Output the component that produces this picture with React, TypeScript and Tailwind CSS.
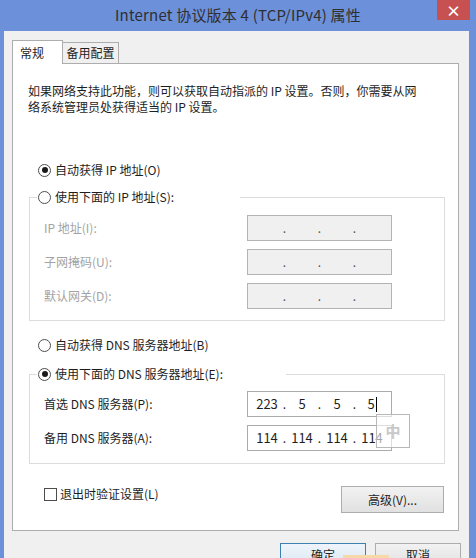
import React from "react";

const FONT = { fontFamily: '"Noto Sans CJK SC", "Microsoft YaHei", sans-serif' };

function Radio({ checked }: { checked?: boolean }) {
  return (
    <span className="w-[13px] h-[13px] rounded-full border border-[#4d4d4d] bg-white flex items-center justify-center shrink-0">
      {checked ? <span className="w-[6px] h-[6px] rounded-full bg-[#1a1a1a]" /> : null}
    </span>
  );
}

function IpBox({ values, disabled, caret }: { values: string[]; disabled?: boolean; caret?: boolean }) {
  return (
    <div
      className={
        "w-[145px] h-[26px] border flex items-center pl-[2px] " +
        (disabled ? "bg-[#f0f0f0] border-[#b4b4b4] text-[#a0a0a0]" : "bg-white border-[#ababab] text-[#1e1e1e]")
      }
    >
      {values.map((v, i) => (
        <React.Fragment key={i}>
          <span className="w-[34px] text-center text-[13px] leading-[24px] flex items-center justify-center">
            {v}
            {caret && i === 3 ? <span className="inline-block w-px h-[15px] bg-black ml-[1px]" /> : null}
          </span>
          {i < 3 ? (
            <span className={"w-[1px] text-[12px] leading-[24px] flex justify-center " + (disabled ? "text-[#555]" : "text-[#1e1e1e]")}>.</span>
          ) : null}
        </React.Fragment>
      ))}
    </div>
  );
}

function FieldRow({ label, disabled, children, last }: { label: string; disabled?: boolean; children: React.ReactNode; last?: boolean }) {
  return (
    <div className={"flex items-center h-[26px] " + (last ? "" : "mb-[8px]")}>
      <div className={"w-[217px] pl-[14px] text-[12px] " + (disabled ? "text-[#a3a3a3]" : "text-[#1e1e1e]")}>{label}</div>
      {children}
    </div>
  );
}

export default function App() {
  return (
    <div className="w-[476px] h-[558px] bg-[#6d90da] flex flex-col overflow-hidden relative text-[#1e1e1e]" style={FONT}>
      {/* Title bar */}
      <div className="h-[31px] shrink-0 relative flex items-center justify-center">
        <span className="text-[15px] text-[#2f2f2f] tracking-[0.2px]">Internet 协议版本 4 (TCP/IPv4) 属性</span>
        <div className="absolute right-[6px] top-0 w-[33px] h-[20px] bg-[#c75050] flex items-center justify-center text-white text-[15px] font-bold leading-none">
          ×
        </div>
      </div>

      {/* Body */}
      <div className="flex-1 ml-[4px] mr-[7px] bg-[#f0f0f0] pt-[9px] pl-[8px] flex flex-col">
        {/* Tabs */}
        <div className="flex items-end h-[23px] relative z-10">
          <div className="w-[51px] h-[24px] -mb-px bg-white border border-b-0 border-[#adadad] flex items-center pl-[7px] text-[12px]">
            常规
          </div>
          <div className="w-[56px] h-[21px] bg-[#f0f0f0] border border-l-0 border-b-0 border-[#adadad] flex items-center justify-center text-[12px]">
            备用配置
          </div>
        </div>

        {/* Panel */}
        <div className="w-[447px] h-[468px] bg-white border border-[#adadad] flex flex-col text-[12px]">
          <p className="pt-[19px] pl-[15px] leading-[16px] text-[12px]">
            如果网络支持此功能，则可以获取自动指派的 IP 设置。否则，你需要从网
            <br />
            络系统管理员处获得适当的 IP 设置。
          </p>

          <div className="mt-[46px] ml-[25px] h-[18px] flex items-center gap-[4px]">
            <Radio checked />
            <span>自动获得 IP 地址(O)</span>
          </div>

          {/* Group 1 */}
          <div className="mt-[18px] ml-[16px] w-[416px] h-[124px] border border-[#dcdcdc] relative pt-[17px]">
            <div className="absolute left-[7px] -top-[10px] w-[203px] h-[18px] bg-white flex items-center gap-[4px] pl-[1px]">
              <Radio />
              <span>使用下面的 IP 地址(S):</span>
            </div>
            <FieldRow label="IP 地址(I):" disabled>
              <IpBox values={["", "", "", ""]} disabled />
            </FieldRow>
            <FieldRow label="子网掩码(U):" disabled>
              <IpBox values={["", "", "", ""]} disabled />
            </FieldRow>
            <FieldRow label="默认网关(D):" disabled last>
              <IpBox values={["", "", "", ""]} disabled />
            </FieldRow>
          </div>

          <div className="mt-[15px] ml-[25px] h-[18px] flex items-center gap-[4px]">
            <Radio />
            <span>自动获得 DNS 服务器地址(B)</span>
          </div>

          {/* Group 2 */}
          <div className="mt-[20px] ml-[16px] w-[416px] h-[90px] border border-[#dcdcdc] relative pt-[16px]">
            <div className="absolute left-[7px] -top-[10px] w-[249px] h-[18px] bg-white flex items-center gap-[4px] pl-[1px]">
              <Radio checked />
              <span>使用下面的 DNS 服务器地址(E):</span>
            </div>
            <FieldRow label="首选 DNS 服务器(P):">
              <IpBox values={["223", "5", "5", "5"]} caret />
            </FieldRow>
            <FieldRow label="备用 DNS 服务器(A):" last>
              <IpBox values={["114", "114", "114", "114"]} />
            </FieldRow>
          </div>

          {/* Bottom row */}
          <div className="mt-[22px] flex items-start justify-between pl-[31px] pr-[14px]">
            <div className="mt-[1px] flex items-center gap-[3px]">
              <span className="w-[13px] h-[13px] border border-[#4d4d4d] bg-white" />
              <span className="leading-[14px]">退出时验证设置(L)</span>
            </div>
            <div className="w-[103px] h-[27px] border border-[#adadad] bg-gradient-to-b from-[#f2f2f2] to-[#e1e1e1] flex items-center justify-center">
              高级(V)...
            </div>
          </div>
        </div>

        {/* Dialog buttons */}
        <div className="mt-[12px] flex justify-end gap-[9px] pr-[8px] text-[12px]">
          <div className="w-[86px] h-[24px] border border-[#3c7fb1] bg-gradient-to-b from-[#eef4fa] to-[#dce8f3] flex items-center justify-center">
            确定
          </div>
          <div className="w-[86px] h-[24px] border border-[#adadad] bg-gradient-to-b from-[#f2f2f2] to-[#e1e1e1] flex items-center justify-center">
            取消
          </div>
        </div>
      </div>

      {/* IME indicator overlay */}
      <div className="absolute left-[376px] top-[414px] w-[34px] h-[34px] border border-[#b8b8b8] bg-white/60 flex items-center justify-center text-[#c8c8c8] text-[15px] font-bold">
        中
      </div>
      {/* Small highlight at bottom */}
      <div className="absolute left-[343px] top-[555px] w-[46px] h-[3px] bg-[#f7d9a8]" />
    </div>
  );
}
